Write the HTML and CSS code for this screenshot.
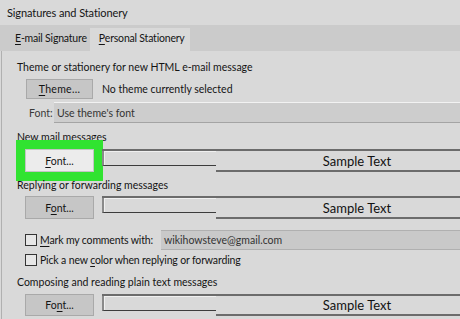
FILE: index.html
```html
<!DOCTYPE html>
<html lang="en">
<head>
    <meta charset="UTF-8">
    <title>Signatures and Stationery</title>
    <link rel="stylesheet" href="styles.css">
</head>
<body>
    <div class="dialog">
        <div class="titlebar">Signatures and Stationery</div>

        <div class="tabs">
            <span class="tab"><u>E</u>-mail Signature</span>
            <span class="tab active"><u>P</u>ersonal Stationery</span>
        </div>

        <div class="panel">
            <div class="label">Theme or stationery for new HTML e-mail message</div>
            <div class="theme-row">
                <button class="btn theme-btn"><u>T</u>heme...</button>
                <span>No theme currently selected</span>
            </div>
            <div class="font-row">
                <span class="font-label">Font:</span>
                <div class="field">Use theme's font</div>
            </div>

            <div class="label label-new">New mail messages</div>
            <div class="btn-row">
                <button class="btn btn-light highlight"><u>F</u>ont...</button>
                <div class="sample">
                    <div class="sample-line"></div>
                    <div class="sample-text">Sample Text</div>
                </div>
            </div>

            <div class="label label-reply">Replying or forwarding messages</div>
            <div class="btn-row row-reply">
                <button class="btn">F<u>o</u>nt...</button>
                <div class="sample">
                    <div class="sample-line"></div>
                    <div class="sample-text">Sample Text</div>
                </div>
            </div>

            <div class="check-row row-mark">
                <span class="checkbox"></span>
                <span class="check-label"><u>M</u>ark my comments with:</span>
                <div class="field email">wikihowsteve@gmail.com</div>
            </div>
            <div class="check-row">
                <span class="checkbox"></span>
                <span class="check-label">Pick a new <u>c</u>olor when replying or forwarding</span>
            </div>

            <div class="label label-plain">Composing and reading plain text messages</div>
            <div class="btn-row row-plain">
                <button class="btn">Fo<u>n</u>t...</button>
                <div class="sample">
                    <div class="sample-line"></div>
                    <div class="sample-text">Sample Text</div>
                </div>
            </div>
        </div>
    </div>
</body>
</html>
```

FILE: styles.css
```css
:root {
    --bg-color: #d9d9d9;
    --strip-color: #cbcbcb;
    --text-color: #141414;
    --btn-bg: #c6c6c6;
    --btn-border: #a9a9a9;
    --line-color: #6c6c6c;
    --green: #31e331;
}

html, body {
    margin: 0;
    padding: 0;
    background: var(--bg-color);
    overflow: hidden;
}

body {
    font-family: Lato, sans-serif;
    font-size: 10.5px;
    color: var(--text-color);
}

u {
    text-decoration-thickness: 1px;
    text-underline-offset: 2px;
}

.dialog {
    width: 460px;
    height: 319px;
    display: flex;
    flex-direction: column;
}

.titlebar {
    height: 25px;
    display: flex;
    align-items: center;
    padding-left: 7px;
    font-size: 11px;
    letter-spacing: -0.1px;
}

.tabs {
    height: 26px;
    background: var(--strip-color);
    display: flex;
    align-items: flex-end;
    padding-left: 8px;
    letter-spacing: -0.2px;
}

.tab {
    height: 20px;
    display: flex;
    align-items: center;
    padding: 0 3px 0 7px;
    margin-bottom: 3px;
    white-space: nowrap;
}

.tab.active {
    background: var(--bg-color);
    margin-bottom: 0;
    padding: 0 5px 3px 9px;
}

.panel {
    flex: 1;
    display: flex;
    flex-direction: column;
    padding-left: 15px;
    border-left: 1px solid #b0b0b0;
    margin-left: 1px;
}

.label {
    height: 20px;
    display: flex;
    align-items: center;
    margin-top: 6px;
    white-space: nowrap;
}

.label-new { margin-top: 4px; }
.label-reply { margin-top: 3px; }
.label-plain { margin-top: 2px; }

.btn {
    font-family: inherit;
    font-size: 10.5px;
    color: var(--text-color);
    background: var(--btn-bg);
    border: 1px solid var(--btn-border);
    width: 69px;
    height: 23px;
    padding: 0;
    margin: 0 0 0 8px;
}

.btn-light {
    background: #ececec;
    border-color: #c4c4c4;
}

.highlight {
    outline: 9px solid var(--green);
}

.theme-row {
    height: 20px;
    display: flex;
    align-items: center;
    gap: 9px;
    margin-top: 2px;
}

.theme-btn {
    width: 67px;
    height: 20px;
    margin-left: 9px;
    letter-spacing: 0.3px;
}

.font-row {
    height: 21px;
    display: flex;
    align-items: center;
    margin-top: 3px;
}

.font-label {
    width: 25px;
    margin-left: 12px;
    color: #3a3a3a;
}

.field {
    flex: 1;
    height: 19px;
    display: flex;
    align-items: center;
    padding-left: 3px;
    background: #cdcdcd;
    border-top: 1px solid #f2f2f2;
    border-bottom: 1px solid #a4a4a4;
    color: #333;
}

.btn-row {
    height: 23px;
    display: flex;
    gap: 8px;
    margin-top: 2px;
}

.row-reply { margin-top: 1px; }
.row-plain { margin-top: 2px; height: 22px; }
.row-plain .btn { height: 22px; }

.sample {
    flex: 1;
    display: flex;
    border-top: 2px solid var(--line-color);
}

.sample-line {
    width: 112px;
    height: 14px;
    border-left: 2px solid #8a8a8a;
    border-bottom: 1px solid #3c3c3c;
    box-shadow: inset 1px 1px 0 #f0f0f0;
    flex-shrink: 0;
}

.sample-text {
    flex: 1;
    display: flex;
    align-items: center;
    padding-left: 38px;
    justify-content: center;
    border-bottom: 2px solid var(--line-color);
    font-size: 13px;
    color: #111;
}

.check-row {
    height: 20px;
    display: flex;
    align-items: center;
}

.row-mark { margin-top: 11px; }

.checkbox {
    width: 10px;
    height: 10px;
    border: 1px solid #333;
    background: #e6e6e6;
    margin-left: 8px;
    margin-right: 3px;
}

.check-label {
    white-space: nowrap;
    letter-spacing: -0.15px;
}

.field.email {
    margin-left: 8px;
    height: 18px;
    border-top: 1px solid #b0b0b0;
    border-bottom: 1px solid #b0b0b0;
    background: #c9c9c9;
    padding-left: 3px;
}
```
